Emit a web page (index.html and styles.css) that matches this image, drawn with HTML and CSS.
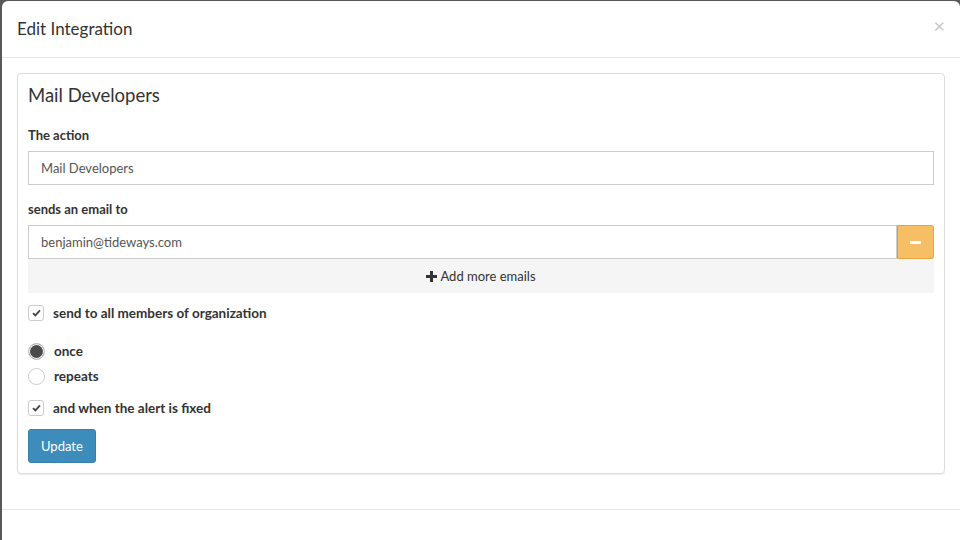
FILE: index.html
```html
<!DOCTYPE html>
<html lang="en">
<head>
    <meta charset="UTF-8">
    <title>Edit Integration</title>
    <link rel="stylesheet" href="styles.css">
</head>
<body>
    <div class="modal">
        <div class="modal-header">
            <h4 class="modal-title">Edit Integration</h4>
            <span class="close">&times;</span>
        </div>

        <div class="modal-body">
            <div class="panel">
                <h3 class="panel-title">Mail Developers</h3>

                <div class="form-group">
                    <label>The action</label>
                    <input class="form-control" type="text" value="Mail Developers">
                </div>

                <div class="form-group emails">
                    <label>sends an email to</label>
                    <div class="input-group">
                        <input class="form-control" type="text" value="benjamin@tideways.com">
                        <button class="btn-warning" type="button"><span class="minus"></span></button>
                    </div>
                    <div class="add-more">
                        <svg width="11" height="11" viewBox="0 0 11 11"><path d="M4 0h3v4h4v3H7v4H4V7H0V4h4z" fill="#333"/></svg>
                        Add more emails
                    </div>
                </div>

                <div class="check-row first">
                    <span class="check-box"><svg width="9" height="8" viewBox="0 0 9 8"><path d="M1 4.2l2.3 2.2L8 1.4" fill="none" stroke="#444" stroke-width="1.8"/></svg></span>
                    <span class="check-label">send to all members of organization</span>
                </div>

                <div class="radios">
                    <div class="check-row">
                        <span class="radio checked"></span>
                        <span class="check-label">once</span>
                    </div>
                    <div class="check-row">
                        <span class="radio"></span>
                        <span class="check-label">repeats</span>
                    </div>
                </div>

                <div class="check-row">
                    <span class="check-box"><svg width="9" height="8" viewBox="0 0 9 8"><path d="M1 4.2l2.3 2.2L8 1.4" fill="none" stroke="#444" stroke-width="1.8"/></svg></span>
                    <span class="check-label">and when the alert is fixed</span>
                </div>

                <button class="btn-primary" type="button">Update</button>
            </div>
        </div>

        <div class="modal-footer"></div>
    </div>
</body>
</html>
```

FILE: styles.css
```css
html, body {
    height: 100%;
}

body {
    margin: 0;
    background-color: #595959;
    font-family: Lato, 'Open Sans', sans-serif;
    font-size: 13px;
    color: #333;
    overflow: hidden;
}

/* Modal */
.modal {
    margin: 1px 0 0 2px;
    width: 958px;
    height: 560px;
    background-color: #fff;
    border-radius: 6px;
}

.modal-header {
    display: flex;
    justify-content: space-between;
    align-items: center;
    padding: 15px;
    border-bottom: 1px solid #e5e5e5;
}

.modal-title {
    margin: 0;
    font-size: 17px;
    font-weight: normal;
    line-height: 26px;
    color: #333;
}

.close {
    font-size: 20px;
    line-height: 20px;
    color: #c8c8c8;
    margin: -9px 0 0 0;
}

.modal-body {
    padding: 15px;
}

.modal-footer {
    border-top: 1px solid #e5e5e5;
}

/* Panel */
.panel {
    margin-bottom: 20px;
    padding: 10px;
    border: 1px solid #ddd;
    border-radius: 4px;
    box-shadow: 0 1px 1px rgba(0, 0, 0, 0.08);
}

.panel-title {
    margin: 0 0 20px;
    font-size: 18.5px;
    font-weight: normal;
    line-height: 22px;
    color: #333;
}

.form-group {
    margin-bottom: 15px;
}

.form-group.emails {
    margin-bottom: 11px;
}

.form-group label {
    display: block;
    font-weight: bold;
    line-height: 18px;
    margin-bottom: 7px;
}

.form-control {
    display: block;
    box-sizing: border-box;
    width: 100%;
    height: 34px;
    padding: 6px 12px;
    border: 1px solid #ccc;
    border-radius: 0;
    font-family: inherit;
    font-size: 13px;
    color: #555;
    outline: none;
}

.input-group {
    display: flex;
}

.input-group .form-control {
    flex: 1;
}

.btn-warning {
    width: 37px;
    height: 34px;
    border: 1px solid #eaa43f;
    border-left-color: #e39a33;
    background-color: #f7bf65;
    border-radius: 0 3px 3px 0;
    display: flex;
    align-items: center;
    justify-content: center;
    padding: 0;
}

.minus {
    width: 11px;
    height: 3px;
    background-color: #fff;
}

.add-more {
    height: 34px;
    background-color: #f5f5f5;
    display: flex;
    align-items: center;
    justify-content: center;
    gap: 3px;
    color: #333;
}

.check-row {
    display: flex;
    align-items: center;
    height: 18px;
    margin-bottom: 7px;
}

.check-row.first {
    margin-bottom: 20px;
}

.radios {
    margin-bottom: 14px;
}

.check-box {
    box-sizing: border-box;
    width: 16px;
    height: 16px;
    border: 1px solid #ccc;
    border-radius: 3px;
    display: flex;
    align-items: center;
    justify-content: center;
}

.radio {
    box-sizing: border-box;
    width: 17px;
    height: 17px;
    border: 1px solid #ccc;
    border-radius: 50%;
    background-color: #fff;
}

.radio.checked {
    background-color: #4a4a4a;
    box-shadow: inset 0 0 0 1px #fff;
}

.check-label {
    margin-left: 9px;
    font-size: 13.5px;
    font-weight: bold;
    color: #333;
}

.btn-primary {
    margin-top: 5px;
    height: 34px;
    padding: 0 12px;
    border: 1px solid #367fa9;
    border-radius: 3px;
    background-color: #3c8dbc;
    color: #fff;
    font-family: inherit;
    font-size: 13px;
}
```
